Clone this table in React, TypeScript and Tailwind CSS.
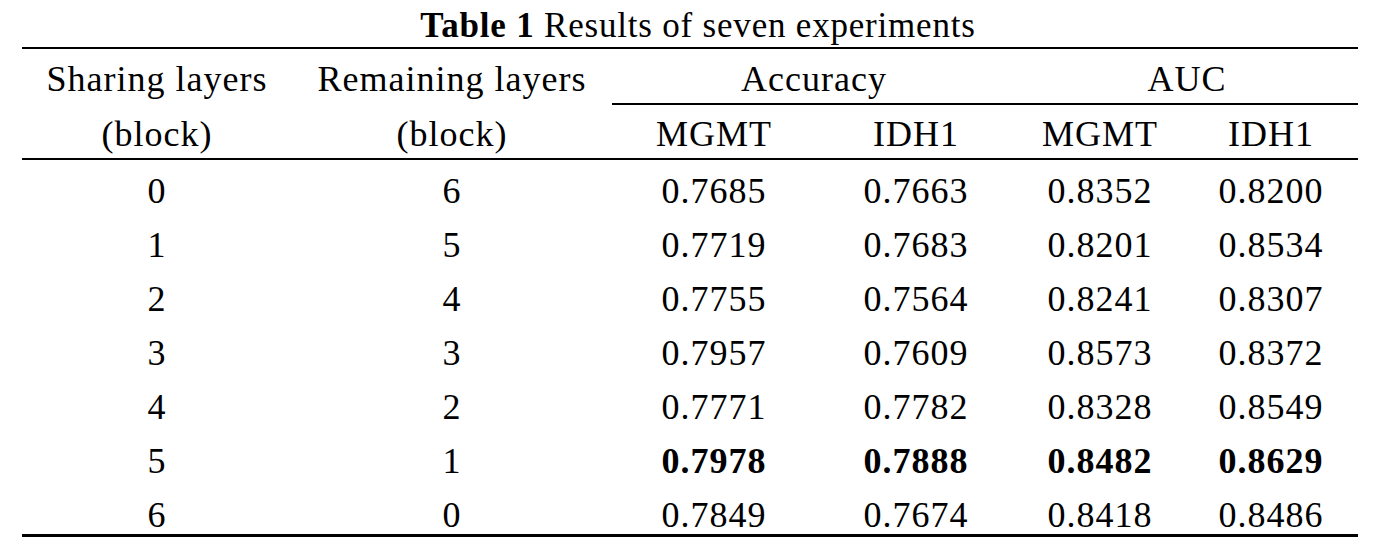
const cols = "grid grid-cols-[270px_320px_204px_200px_168px_174px]";

const rows: { values: string[]; bold?: boolean }[] = [
  { values: ["0", "6", "0.7685", "0.7663", "0.8352", "0.8200"] },
  { values: ["1", "5", "0.7719", "0.7683", "0.8201", "0.8534"] },
  { values: ["2", "4", "0.7755", "0.7564", "0.8241", "0.8307"] },
  { values: ["3", "3", "0.7957", "0.7609", "0.8573", "0.8372"] },
  { values: ["4", "2", "0.7771", "0.7782", "0.8328", "0.8549"] },
  { values: ["5", "1", "0.7978", "0.7888", "0.8482", "0.8629"], bold: true },
  { values: ["6", "0", "0.7849", "0.7674", "0.8418", "0.8486"] },
];

function Rule() {
  return <div className="h-[2.5px] bg-black" />;
}

export default function App() {
  return (
    <div className="h-[557px] w-[1384px] bg-white pt-[7px] font-[family-name:'Liberation_Serif','Times_New_Roman',serif] text-black">
      <div className="ml-[22px] w-[1336px]">
        <div className="h-[38px] pl-[16px] text-center text-[35px] leading-[37px] tracking-[0.8px]">
          <span className="font-bold">Table 1</span> Results of seven experiments
        </div>
        <div className="mt-[1.5px]">
          <Rule />
        </div>

        {/* header */}
        <div className={`${cols} text-center text-[36px] leading-[37px] tracking-[1px]`}>
          <div className="h-[55.5px] pt-[12px]">Sharing layers</div>
          <div className="h-[55.5px] pt-[12px]">Remaining layers</div>
          <div className="col-span-2 h-[55.5px] border-b-[2.5px] border-black pt-[12px]">Accuracy</div>
          <div className="col-span-2 h-[55.5px] border-b-[2.5px] border-black pt-[12px]">AUC</div>
          <div className="h-[53.2px] pt-[11px]">(block)</div>
          <div className="h-[53.2px] pt-[11px]">(block)</div>
          <div className="h-[53.2px] pt-[11px]">MGMT</div>
          <div className="h-[53.2px] pt-[11px]">IDH1</div>
          <div className="h-[53.2px] pt-[11px]">MGMT</div>
          <div className="h-[53.2px] pt-[11px]">IDH1</div>
        </div>
        <Rule />

        {/* body */}
        <div className="text-center text-[36px] leading-[37px] tracking-[1px]">
          {rows.map((row, i) => (
            <div key={i} className={`${cols} h-[54px] pt-[12.5px] last:h-[50px]`}>
              {row.values.map((v, j) => (
                <div key={j} className={row.bold && j >= 2 ? "font-bold" : ""}>
                  {v}
                </div>
              ))}
            </div>
          ))}
        </div>
        <Rule />
      </div>
    </div>
  );
}
